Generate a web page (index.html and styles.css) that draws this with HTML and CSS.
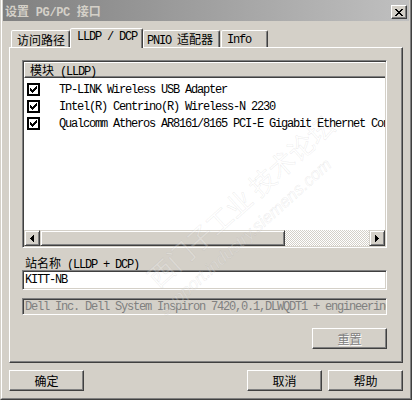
FILE: index.html
```html
<!DOCTYPE html>
<html>
<head>
<meta charset="utf-8">
<link rel="stylesheet" href="styles.css">
</head>
<body>
<div class="win">
  <div class="win-in">
    <div class="titlebar">
      <span class="title-text"><span class="c">设置</span> PG/PC <span class="c">接口</span></span>
      <div class="close">
        <svg width="8" height="7" viewBox="0 0 8 7" shape-rendering="crispEdges">
          <rect x="0" y="0" width="2" height="1"/><rect x="6" y="0" width="2" height="1"/>
          <rect x="1" y="1" width="2" height="1"/><rect x="5" y="1" width="2" height="1"/>
          <rect x="2" y="2" width="4" height="1"/>
          <rect x="3" y="3" width="2" height="1"/>
          <rect x="2" y="4" width="4" height="1"/>
          <rect x="1" y="5" width="2" height="1"/><rect x="5" y="5" width="2" height="1"/>
          <rect x="0" y="6" width="2" height="1"/><rect x="6" y="6" width="2" height="1"/>
        </svg>
      </div>
    </div>
    <div class="body">
      <div class="tabs">
        <div class="tab t1"><span class="c">访问路径</span></div>
        <div class="tab sel"><span>LLDP / DCP</span></div>
        <div class="tab t3"><span>PNIO <span class="c">适配器</span></span></div>
        <div class="tab t4"><span>Info</span></div>
      </div>
      <div class="panel">
        <div class="list">
          <div class="lhead"><span class="c">模块</span> (LLDP)</div>
          <div class="rows">
            <div class="row">
              <span class="cb"><svg width="7" height="7" viewBox="0 0 7 7" shape-rendering="crispEdges"><rect x="6" y="0" width="1" height="1"/><rect x="5" y="1" width="2" height="1"/><rect x="0" y="2" width="1" height="1"/><rect x="4" y="2" width="3" height="1"/><rect x="0" y="3" width="2" height="1"/><rect x="3" y="3" width="3" height="1"/><rect x="0" y="4" width="5" height="1"/><rect x="1" y="5" width="3" height="1"/><rect x="2" y="6" width="1" height="1"/></svg></span>
              <span class="rt">TP-LINK Wireless USB Adapter</span>
            </div>
            <div class="row">
              <span class="cb"><svg width="7" height="7" viewBox="0 0 7 7" shape-rendering="crispEdges"><rect x="6" y="0" width="1" height="1"/><rect x="5" y="1" width="2" height="1"/><rect x="0" y="2" width="1" height="1"/><rect x="4" y="2" width="3" height="1"/><rect x="0" y="3" width="2" height="1"/><rect x="3" y="3" width="3" height="1"/><rect x="0" y="4" width="5" height="1"/><rect x="1" y="5" width="3" height="1"/><rect x="2" y="6" width="1" height="1"/></svg></span>
              <span class="rt">Intel(R) Centrino(R) Wireless-N 2230</span>
            </div>
            <div class="row">
              <span class="cb"><svg width="7" height="7" viewBox="0 0 7 7" shape-rendering="crispEdges"><rect x="6" y="0" width="1" height="1"/><rect x="5" y="1" width="2" height="1"/><rect x="0" y="2" width="1" height="1"/><rect x="4" y="2" width="3" height="1"/><rect x="0" y="3" width="2" height="1"/><rect x="3" y="3" width="3" height="1"/><rect x="0" y="4" width="5" height="1"/><rect x="1" y="5" width="3" height="1"/><rect x="2" y="6" width="1" height="1"/></svg></span>
              <span class="rt">Qualcomm Atheros AR8161/8165 PCI-E Gigabit Ethernet Controller</span>
            </div>
          </div>
          <div class="hscroll">
            <div class="sbtn">
              <svg width="4" height="7" viewBox="0 0 4 7" shape-rendering="crispEdges"><rect x="3" y="0" width="1" height="7"/><rect x="2" y="1" width="1" height="5"/><rect x="1" y="2" width="1" height="3"/><rect x="0" y="3" width="1" height="1"/></svg>
            </div>
            <div class="thumb"></div>
            <div class="track"></div>
            <div class="sbtn">
              <svg width="4" height="7" viewBox="0 0 4 7" shape-rendering="crispEdges"><rect x="0" y="0" width="1" height="7"/><rect x="1" y="1" width="1" height="5"/><rect x="2" y="2" width="1" height="3"/><rect x="3" y="3" width="1" height="1"/></svg>
            </div>
          </div>
        </div>
        <div class="label"><span class="c">站名称</span> (LLDP + DCP)</div>
        <div class="edit"><span>KITT-NB</span></div>
        <div class="edit ro"><span>Dell Inc. Dell System Inspiron 7420,0.1,DLWQDT1 + engineering</span></div>
        <div class="resetrow"><div class="btn dis"><span class="c">重置</span></div></div>
      </div>
      <div class="buttons">
        <div class="btn"><span class="c">确定</span></div>
        <div class="btn push"><span class="c">取消</span></div>
        <div class="btn"><span class="c">帮助</span></div>
      </div>
    </div>
  </div>
  <div class="wm">
    <div class="wm-cn">西门子工业 技术论坛</div>
    <div class="wm-en">support.industry.siemens.com</div>
  </div>
</div>
</body>
</html>
```

FILE: styles.css
```css
* { box-sizing: border-box; }
html, body { margin: 0; padding: 0; }
body {
  width: 412px;
  height: 400px;
  background: #d4d0c8;
  font-family: "Liberation Mono", "Noto Sans CJK SC", monospace;
  font-size: 12px;
  letter-spacing: -1.2px;
  color: #000;
  overflow: hidden;
}
.c { font-family: "Noto Sans CJK SC", sans-serif; letter-spacing: 0; }

.win {
  position: relative;
  width: 412px;
  height: 400px;
  border: 1px solid;
  border-top: 0;
  border-color: #d4d0c8 #404040 #404040 #d4d0c8;
  overflow: hidden;
}
.win-in {
  height: 100%;
  border: 1px solid;
  border-top: 0;
  border-color: #fff #808080 #808080 #fff;
  padding: 0 1px 1px 1px;
  display: flex;
  flex-direction: column;
}

.titlebar {
  height: 21px;
  flex: none;
  display: flex;
  align-items: flex-start;
  justify-content: space-between;
  background: linear-gradient(to right, #808080, #c0c0c0);
}
.title-text {
  padding-left: 2px;
  line-height: 21px;
  font-weight: bold;
  letter-spacing: -0.4px;
  color: #d4d0c8;
  white-space: pre;
}
.close {
  margin-top: 5px;
  margin-right: 2px;
  width: 16px;
  height: 14px;
  background: #d4d0c8;
  border: 1px solid;
  border-color: #fff #404040 #404040 #fff;
  box-shadow: inset -1px -1px #808080;
  display: flex;
  align-items: center;
  justify-content: center;
}
.close svg { fill: #000; display: block; }

.body {
  flex: 1;
  padding: 7px 6px 6px 6px;
  display: flex;
  flex-direction: column;
}

.tabs {
  height: 19px;
  display: flex;
  align-items: flex-end;
  padding-left: 2px;
  position: relative;
  z-index: 2;
}
.tab {
  height: 17px;
  background: #d4d0c8;
  border: 1px solid;
  border-bottom: 0;
  border-color: #fff #404040 transparent #fff;
  border-top-left-radius: 2px;
  border-top-right-radius: 2px;
  box-shadow: inset -1px 0 #808080;
  display: flex;
  align-items: center;
  white-space: pre;
  line-height: 14px;
}
.t1 { width: 59px; padding-left: 5px; padding-top: 1px; }
.sel { width: 73px; height: 20px; margin-bottom: -1px; padding-left: 6px; padding-bottom: 4px; }
.t3 { width: 77px; padding-left: 3px; padding-top: 1px; }
.t4 { width: 47px; margin-left: 1px; padding-left: 5px; padding-top: 1px; }

.panel {
  flex: none;
  border: 1px solid;
  border-color: #fff #404040 #404040 #fff;
  box-shadow: inset -1px -1px #808080;
  padding: 12px 15px 13px 12px;
  display: flex;
  flex-direction: column;
}

.list {
  height: 188px;
  background: #fff;
  border: 1px solid;
  border-color: #808080 #fff #fff #808080;
  box-shadow: inset 1px 1px #404040, inset -1px -1px #d4d0c8;
  padding: 1px;
  display: flex;
  flex-direction: column;
  overflow: hidden;
}
.lhead {
  height: 16px;
  flex: none;
  background: #d4d0c8;
  border-top: 1px solid #fff;
  border-left: 1px solid #fff;
  border-bottom: 1px solid #404040;
  box-shadow: inset 0 -1px #808080;
  padding-left: 5px;
  line-height: 13px;
  white-space: pre;
}
.rows {
  flex: 1;
  padding-top: 3px;
  overflow: hidden;
}
.row {
  height: 17px;
  display: flex;
  align-items: center;
  padding-left: 3px;
  white-space: pre;
}
.cb {
  flex: none;
  width: 13px;
  height: 13px;
  border: 2px solid #000;
  background: #fff;
  display: flex;
  align-items: center;
  justify-content: center;
  margin-right: 19px;
}
.cb svg { display: block; fill: #000; }
.rt { line-height: 14px; }

.hscroll {
  height: 16px;
  flex: none;
  display: flex;
}
.sbtn, .thumb {
  background: #d4d0c8;
  border: 1px solid;
  border-color: #d4d0c8 #404040 #404040 #d4d0c8;
  box-shadow: inset 1px 1px #fff, inset -1px -1px #808080;
}
.sbtn {
  width: 16px;
  height: 16px;
  flex: none;
  display: flex;
  align-items: center;
  justify-content: center;
}
.sbtn svg { display: block; fill: #000; }
.thumb { width: 245px; flex: none; }
.track {
  flex: 1;
  background: repeating-conic-gradient(#d4d0c8 0 25%, #fff 0 50%) 0 0 / 2px 2px;
}

.label {
  margin-top: 7px;
  height: 15px;
  line-height: 15px;
  padding-left: 3px;
  white-space: pre;
}
.edit {
  height: 20px;
  background: #fff;
  border: 1px solid;
  border-color: #808080 #fff #fff #808080;
  box-shadow: inset 1px 1px #404040, inset -1px -1px #d4d0c8;
  padding-left: 2px;
  display: flex;
  align-items: center;
  white-space: pre;
  overflow: hidden;
  line-height: 14px;
}
.edit.ro {
  margin-top: 8px;
  height: 17px;
  background: #d4d0c8;
  color: #808080;
}

.resetrow {
  margin-top: 13px;
  display: flex;
  justify-content: flex-end;
}
.btn {
  width: 75px;
  height: 21px;
  background: #d4d0c8;
  border: 1px solid;
  border-color: #fff #404040 #404040 #fff;
  box-shadow: inset -1px -1px #808080;
  display: flex;
  align-items: center;
  justify-content: center;
  line-height: 14px;
}
.btn.dis { color: #808080; text-shadow: 1px 1px #fff; }

.buttons {
  margin-top: 7px;
  display: flex;
  gap: 6px;
}
.push { margin-left: auto; }

.wm {
  position: absolute;
  left: 0;
  top: 0;
  width: 412px;
  height: 400px;
  pointer-events: none;
}
.wm-cn, .wm-en {
  position: absolute;
  white-space: nowrap;
  letter-spacing: 0;
  color: rgba(255,255,255,0.22);
  -webkit-text-stroke: 0.5px rgba(150,150,150,0.2);
  transform-origin: left bottom;
  transform: rotate(-42deg);
}
.wm-cn {
  left: 160px;
  top: 262px;
  font-family: "Noto Sans CJK SC", sans-serif;
  font-size: 26px;
  line-height: 30px;
}
.wm-en {
  left: 168px;
  top: 300px;
  font-family: "Liberation Sans", sans-serif;
  font-style: italic;
  font-size: 17px;
  line-height: 20px;
}
```
